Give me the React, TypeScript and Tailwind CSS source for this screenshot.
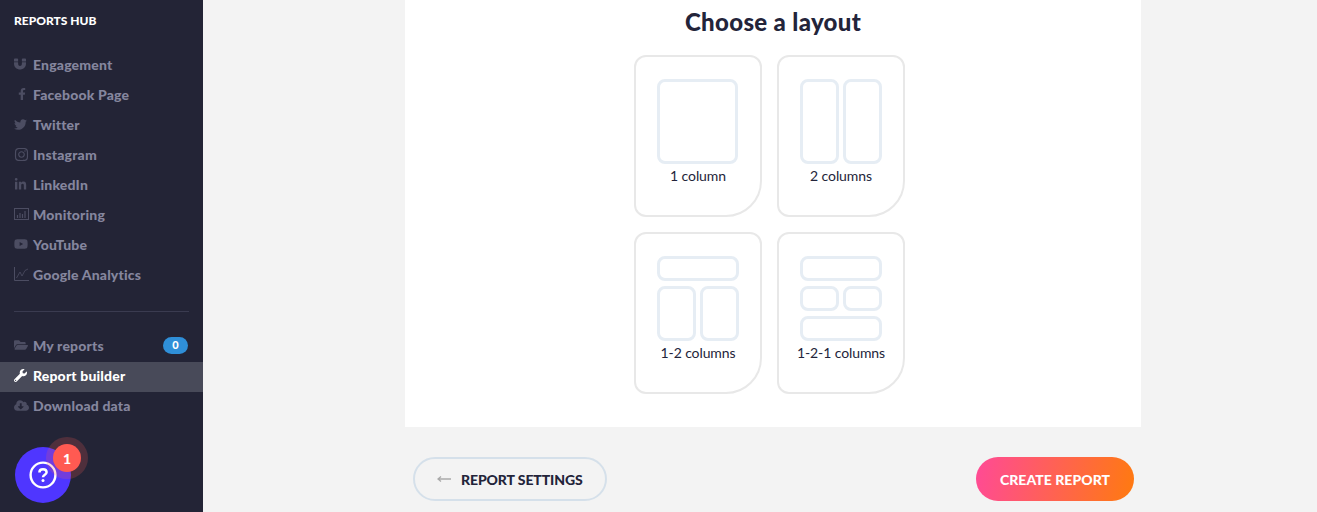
import type { ReactNode } from "react";
import {
  FaCloudDownloadAlt,
  FaFacebookF,
  FaFolderOpen,
  FaInstagram,
  FaLinkedinIn,
  FaMagnet,
  FaTwitter,
  FaWrench,
  FaYoutube,
} from "react-icons/fa";
import clsx from "clsx";

function MonitoringIcon() {
  return (
    <svg width="15" height="12" viewBox="0 0 15 12" fill="none" className="text-[#4c4d62]">
      <rect x="0.5" y="0.5" width="14" height="11" stroke="currentColor" />
      <path d="M3.5 10V7M6 10V5M8.5 10V6M11 10V3" stroke="currentColor" strokeWidth="1.2" />
    </svg>
  );
}

function AnalyticsIcon() {
  return (
    <svg width="15" height="14" viewBox="0 0 15 14" fill="none" className="text-[#4c4d62]">
      <path d="M0.5 0V13.5H15" stroke="currentColor" />
      <path d="M2.5 11L6 5L8 9L11 3.5L14 2" stroke="currentColor" strokeWidth="0.8" />
    </svg>
  );
}

function HelpIcon() {
  return (
    <svg width="28" height="28" viewBox="0 0 28 28" fill="none" stroke="white" strokeWidth="2.4">
      <circle cx="14" cy="14" r="12.4" />
      <path d="M10.4 11.4C10.4 9.4 12 8.2 14 8.2C16 8.2 17.6 9.4 17.6 11.2C17.6 13.6 14 13.8 14 16.2" strokeWidth="2.5" />
      <circle cx="14" cy="19.6" r="1.5" fill="white" stroke="none" />
    </svg>
  );
}

const mainLinks: { label: string; icon: ReactNode }[] = [
  { label: "Engagement", icon: <FaMagnet className="text-[12px]" /> },
  { label: "Facebook Page", icon: <FaFacebookF className="ml-[2px] text-[12px]" /> },
  { label: "Twitter", icon: <FaTwitter className="text-[13px]" /> },
  { label: "Instagram", icon: <FaInstagram className="text-[15px]" /> },
  { label: "LinkedIn", icon: <FaLinkedinIn className="text-[13px]" /> },
  { label: "Monitoring", icon: <MonitoringIcon /> },
  { label: "YouTube", icon: <FaYoutube className="text-[14px]" /> },
  { label: "Google Analytics", icon: <AnalyticsIcon /> },
];

function NavRow({
  label,
  icon,
  active,
  className,
  children,
}: {
  label: string;
  icon: ReactNode;
  active?: boolean;
  className?: string;
  children?: ReactNode;
}) {
  return (
    <div
      className={clsx(
        "flex h-[30px] items-center pl-[14px] pr-[15px] text-[14px] font-black tracking-[0.17px]",
        active ? "bg-[#484a59] text-white" : "text-[#85869e]",
        className
      )}
    >
      <span className={clsx("flex w-[19px] shrink-0 items-center", active ? "text-white" : "text-[#4c4d62]")}>{icon}</span>
      <span>{label}</span>
      {children}
    </div>
  );
}

function Box({ className }: { className?: string }) {
  return <div className={clsx("rounded-[8px] border-[3px] border-[#e6edf4]", className)} />;
}

function LayoutCard({ label, children }: { label: string; children: ReactNode }) {
  return (
    <div className="flex h-[162px] w-[128px] flex-col items-center rounded-tl-[12px] rounded-tr-[12px] rounded-bl-[12px] rounded-br-[36px] border-2 border-[#e8e8e8] pt-[22px]">
      <div className="h-[85px] w-[82px]">{children}</div>
      <p className="mt-[2px] text-[14px] leading-[20px] tracking-[-0.1px] text-[#23243a]">{label}</p>
    </div>
  );
}

export default function App() {
  return (
    <div className="relative flex h-[512px] w-[1317px] overflow-hidden bg-[#f3f3f3] font-['Lato',sans-serif]">
      <aside className="flex w-[203px] shrink-0 flex-col bg-[#232436]">
        <h1 className="pl-[14px] pt-[14px] text-[12px] font-black leading-[13px] text-white">REPORTS HUB</h1>
        <nav className="mt-[23px]">
          {mainLinks.map((link) => (
            <NavRow key={link.label} label={link.label} icon={link.icon} className="pb-[2px]" />
          ))}
        </nav>
        <div className="mx-[14px] mb-[20px] mt-[21px] h-px bg-[#3a3b50]" />
        <nav>
          <NavRow label="My reports" className="pb-[4px]" icon={<FaFolderOpen className="text-[14px]" />}>
            <span className="ml-auto flex h-[17px] w-[25px] items-center justify-center rounded-full bg-[#2f8fd8] text-[11px] font-black text-white">
              0
            </span>
          </NavRow>
          <NavRow label="Report builder" active className="pb-[4px]" icon={<FaWrench className="text-[13px]" />} />
          <NavRow label="Download data" className="pb-[4px]" icon={<FaCloudDownloadAlt className="text-[15px]" />} />
        </nav>
      </aside>

      <main className="flex-1 pl-[202px] pr-[176px]">
        <section className="h-[427px] bg-white">
          <h2 className="pt-[7px] text-center text-[24px] font-black leading-[30px] tracking-[0.33px] text-[#23243a]">Choose a layout</h2>
          <div className="ml-[229px] mt-[18px] grid w-[271px] grid-cols-[128px_128px] gap-[15px]">
            <LayoutCard label="1 column">
              <Box className="h-full w-[81px]" />
            </LayoutCard>
            <LayoutCard label="2 columns">
              <div className="grid h-full grid-cols-2 gap-[4px]">
                <Box />
                <Box />
              </div>
            </LayoutCard>
            <LayoutCard label="1-2 columns">
              <div className="flex h-full flex-col gap-[5px]">
                <Box className="h-[25px]" />
                <div className="grid flex-1 grid-cols-2 gap-[4px]">
                  <Box />
                  <Box />
                </div>
              </div>
            </LayoutCard>
            <LayoutCard label="1-2-1 columns">
              <div className="flex h-full flex-col gap-[5px]">
                <Box className="h-[25px]" />
                <div className="grid h-[25px] grid-cols-2 gap-[4px]">
                  <Box />
                  <Box />
                </div>
                <Box className="h-[25px]" />
              </div>
            </LayoutCard>
          </div>
        </section>
        <div className="mt-[30px] flex justify-between pl-[8px] pr-[7px]">
          <button className="flex h-[44px] w-[194px] items-center rounded-full border-2 border-[#d5e0ea] pl-[22px] text-[14px] font-black tracking-[-0.1px] text-[#23243a]">
            <svg width="14" height="6" viewBox="0 0 14 6" fill="none" className="mr-[10px] text-[#aaaaaa]">
              <path d="M14 3H1M4 0.5L1 3L4 5.5" stroke="currentColor" strokeWidth="1.3" />
            </svg>
            REPORT SETTINGS
          </button>
          <button className="h-[44px] w-[158px] rounded-full bg-[linear-gradient(100deg,#ff4a96,#ff7a0f)] text-[14px] font-black tracking-[0.05px] text-white">
            CREATE REPORT
          </button>
        </div>
      </main>

      <div className="absolute left-[15px] top-[447px] flex h-[56px] w-[56px] items-center justify-center rounded-full bg-[#4f36ff]">
        <HelpIcon />
      </div>
      <div className="absolute left-[46px] top-[437px] flex h-[42px] w-[42px] items-center justify-center rounded-full bg-[#ff5a52]/20">
        <span className="flex h-[28px] w-[28px] items-center justify-center rounded-full bg-[#ff5a52] text-[14px] font-black text-white">1</span>
      </div>
    </div>
  );
}
